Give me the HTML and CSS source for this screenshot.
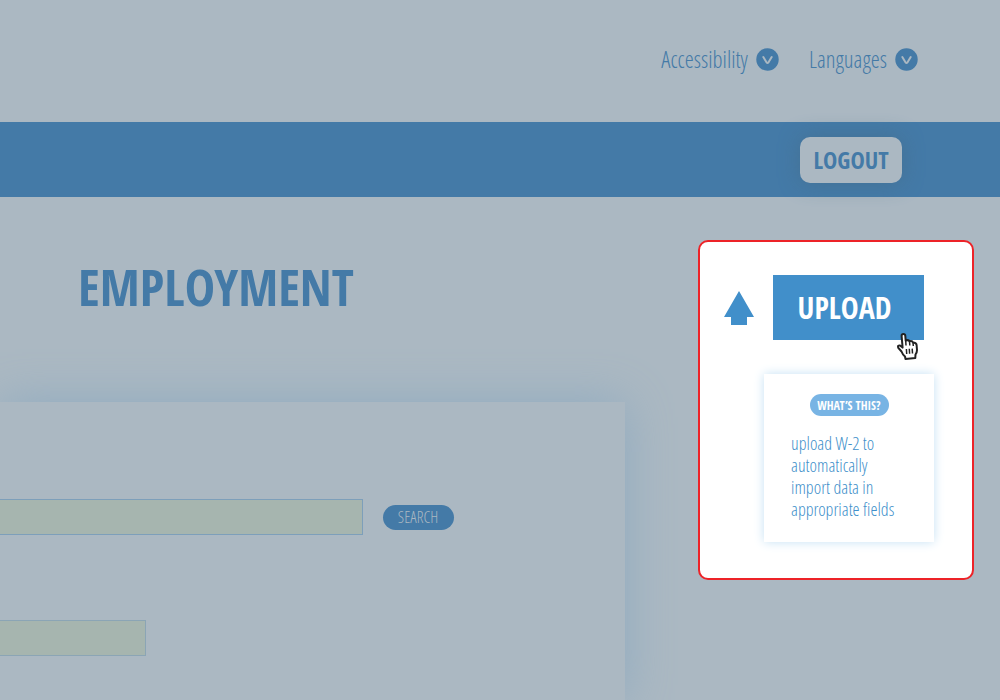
FILE: index.html
```
<!DOCTYPE html>
<html lang="en">
<head>
<meta charset="utf-8">
<meta name="viewport" content="width=device-width, initial-scale=1">
<title>Employment</title>
<link rel="stylesheet" href="styles.css">
</head>
<body>
<header class="topbar">
  <button class="menu" type="button">Accessibility
    <svg class="chevron" viewBox="0 0 23 23" aria-hidden="true"><circle cx="11.5" cy="11.5" r="11.2"/><path d="M7.3 9 L10.6 14.5 Q11.5 15.7 12.4 14.5 L15.7 9"/></svg>
  </button>
  <button class="menu" type="button">Languages
    <svg class="chevron" viewBox="0 0 23 23" aria-hidden="true"><circle cx="11.5" cy="11.5" r="11.2"/><path d="M7.3 9 L10.6 14.5 Q11.5 15.7 12.4 14.5 L15.7 9"/></svg>
  </button>
</header>
<nav class="band"><button class="logout" type="button">LOGOUT</button></nav>
<main class="content">
  <section class="employment">
    <h1 class="title">EMPLOYMENT</h1>
    <form class="sheet">
      <div class="row">
        <input class="field field-long" type="text" aria-label="Employer search">
        <button class="search" type="button">SEARCH</button>
      </div>
      <div class="row">
        <input class="field field-short" type="text" aria-label="Employer detail">
      </div>
    </form>
  </section>
  <aside class="panel">
    <div class="upload-row">
      <svg class="arrow" viewBox="0 0 30 34" aria-hidden="true"><path d="M15 0 L30 26 H23 V34 H7 V26 H0 Z"/></svg>
      <button class="upload" type="button">UPLOAD
        <svg class="cursor" viewBox="0 0 21 27" aria-hidden="true">
          <path class="hand" d="M4.6 2.8 Q4.6 1 6.4 1 Q8.2 1 8.3 2.8 L8.7 7.6 Q11.6 6.4 12.5 8.2 Q15.2 7.4 16 9.4 Q19.4 9.4 19.6 12 L20 17 Q20 19.5 18.5 21.5 L18.3 25 L8.5 26 L8 23.5 Q5.5 21.3 4.5 18.5 L1.3 14.8 Q.3 12.2 3 12.4 L5.6 14.6 Z"/>
          <path class="creases" d="M8.7 7.6 L9 12.5 M12.5 8.2 L12.8 12.5 M16 9.4 L16.3 13 M9.4 16 L9.7 21 M12.3 15.8 L12.6 20.8 M15.2 15.6 L15.5 20.5"/>
        </svg>
      </button>
    </div>
    <div class="help">
      <button class="help-pill" type="button">WHAT’S THIS?</button>
      <p class="help-text">upload W-2 to<br>automatically<br>import data in<br>appropriate fields</p>
    </div>
  </aside>
</main>
</body>
</html>
```
FILE: styles.css
```
:root {
  --page: #abb8c2;
  --blue: #447aa7;
  --bright: #418fca;
  --light: "Open Sans Condensed Light", "Roboto Condensed", "Liberation Sans Narrow", "Liberation Sans", sans-serif;
}
* { box-sizing: border-box; }
body {
  margin: 0;
  min-height: 100vh;
  display: flex;
  flex-direction: column;
  background: var(--page);
  color: var(--blue);
  font-family: "Open Sans Condensed", "Roboto Condensed", "Liberation Sans Narrow", "Liberation Sans", sans-serif;
}
button, input { font-family: inherit; margin: 0; }
button { border: 0; padding: 0; cursor: pointer; white-space: nowrap; }
.topbar {
  height: 122px;
  padding: 0 82px 4px 0;
  display: flex;
  justify-content: flex-end;
  align-items: center;
  gap: 30px;
}
.menu {
  display: flex;
  align-items: center;
  gap: 8px;
  background: none;
  color: var(--blue);
  font-family: var(--light);
  font-weight: 300;
  font-size: 23px;
  line-height: 30px;
}
.chevron { width: 23px; height: 23px; fill: var(--blue); }
.chevron path { fill: none; stroke: var(--page); stroke-width: 2; stroke-linecap: round; }
.band {
  height: 75px;
  padding-right: 98px;
  display: flex;
  justify-content: flex-end;
  align-items: center;
  background: var(--blue);
}
.logout {
  width: 102px;
  height: 46px;
  border-radius: 10px;
  background: var(--page);
  color: var(--blue);
  font-size: 24px;
  font-weight: 700;
  box-shadow: 0 0 20px rgba(68, 112, 145, 0.9);
}
.content {
  flex: 1;
  display: grid;
  grid-template-columns: 1fr 276px;
  column-gap: 73px;
  padding-right: 26px;
  overflow: hidden;
}
.employment { display: flex; flex-direction: column; }
.title {
  margin: 0;
  padding: 54px 0 80px 78px;
  font-size: 51px;
  line-height: 71px;
  font-weight: 700;
}
.sheet {
  flex: 1;
  padding-top: 97px;
  display: flex;
  flex-direction: column;
  gap: 85px;
  background: var(--page);
  box-shadow: 0 0 44px #8fabc0;
}
.row { display: flex; align-items: center; gap: 20px; }
.field {
  height: 36px;
  padding: 0 12px;
  border: 1px solid #8ba5b5;
  border-left: 0;
  border-radius: 0;
  background: #a6b5af;
  color: var(--blue);
  font-size: 16px;
}
.field-long { width: 58%; border-color: #7d9fba; }
.field-short { width: 146px; }
.search {
  width: 71px;
  height: 25px;
  border-radius: 13px;
  background: var(--blue);
  color: var(--page);
  font-family: var(--light);
  font-size: 16px;
}
.panel {
  align-self: start;
  margin-top: 43px;
  padding: 33px 38px 36px 24px;
  border: 2px solid #ed2328;
  border-radius: 10px;
  background: #fff;
  color: var(--bright);
  display: flex;
  flex-direction: column;
  align-items: flex-end;
  gap: 34px;
}
.upload-row {
  width: 100%;
  padding-right: 10px;
  display: flex;
  align-items: center;
  justify-content: space-between;
}
.arrow { width: 30px; height: 34px; fill: var(--bright); }
.upload {
  position: relative;
  width: 151px;
  height: 65px;
  padding-right: 8px;
  background: var(--bright);
  color: #fff;
  font-size: 30px;
  font-weight: 700;
}
.cursor { position: absolute; right: 6px; bottom: -20px; width: 21px; height: 27px; }
.hand { fill: #fff; stroke: #222; stroke-width: 2; stroke-linejoin: round; }
.creases { fill: none; stroke: #222; stroke-width: 1.5; }
.help {
  width: 170px;
  padding: 20px 0 22px;
  background: #fff;
  box-shadow: 0 0 10px #c5e1f4;
  display: flex;
  flex-direction: column;
  align-items: center;
}
.help-pill {
  width: 79px;
  height: 22px;
  border-radius: 11px;
  background: #78b4e4;
  color: #fff;
  font-size: 12px;
  font-weight: 700;
}
.help-text {
  align-self: stretch;
  margin: 16px 0 0 27px;
  font-family: var(--light);
  font-weight: 300;
  font-size: 18px;
  line-height: 22px;
}
```
